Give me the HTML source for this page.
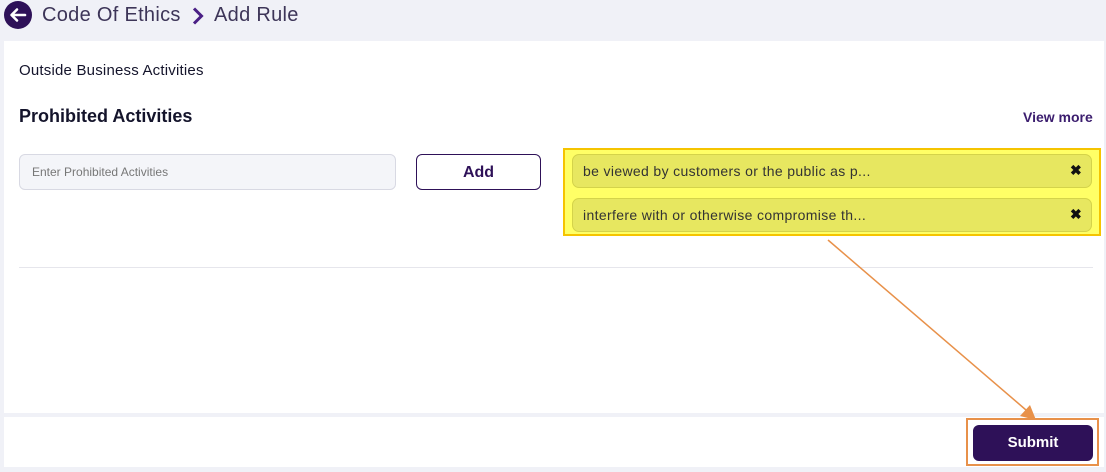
<!DOCTYPE html>
<html><head><style>
body{margin:0;width:1106px;height:472px;background:#f0f1f7;font-family:"Liberation Sans",sans-serif;position:relative;overflow:hidden}
.a{position:absolute}
</style></head><body>
<div class="a" style="left:4px;top:1px;width:28px;height:28px;border-radius:50%;background:#2e1158"></div>
<svg class="a" style="left:4px;top:1px" width="28" height="28"><path d="M21 14H8M13 8.5L7.5 14 13 19.5" stroke="#fff" stroke-width="2.6" fill="none" stroke-linecap="round" stroke-linejoin="round"/></svg>
<div class="a" style="left:42px;top:4px;font-size:20px;color:#3d3558;letter-spacing:0.3px">Code Of Ethics</div>
<svg class="a" style="left:191px;top:6px" width="14" height="20"><path d="M3 2.5l7.5 7.5-7.5 7.5" stroke="#4a1f85" stroke-width="3" fill="none"/></svg>
<div class="a" style="left:214px;top:4px;font-size:20px;color:#3d3558;letter-spacing:0.3px">Add Rule</div>
<div class="a" style="left:4px;top:41px;width:1100px;height:372px;background:#fff"></div>
<div class="a" style="left:4px;top:417px;width:1100px;height:50px;background:#fff"></div>
<div class="a" style="left:19px;top:62px;font-size:15px;color:#14142b;letter-spacing:0.2px">Outside Business Activities</div>
<div class="a" style="left:19px;top:106px;font-size:18px;font-weight:bold;color:#14142b">Prohibited Activities</div>
<div class="a" style="left:1023px;top:109px;font-size:14px;font-weight:bold;color:#3b1d6e">View more</div>
<div class="a" style="left:19px;top:154px;width:375px;height:34px;border:1px solid #d8d9e3;border-radius:6px;background:#f4f5f9"></div>
<div class="a" style="left:32px;top:165px;font-size:12px;color:#777">Enter Prohibited Activities</div>
<div class="a" style="left:416px;top:154px;width:123px;height:34px;border:1.5px solid #2e1158;border-radius:6px;text-align:center;line-height:36px;font-size:16px;font-weight:bold;color:#2e1158">Add</div>
<div class="a" style="left:563px;top:148px;width:538px;height:88px;background:#ffff66;border:2px solid #f5c400;box-sizing:border-box"></div>
<div class="a" style="left:572px;top:154px;width:520px;height:34px;background:#e7e760;border:1px solid #d4d34a;border-radius:7px;box-sizing:border-box"></div>
<div class="a" style="left:583px;top:163px;font-size:14px;color:#333;letter-spacing:0.35px">be viewed by customers or the public as p...</div>
<div class="a" style="left:1070px;top:162px;font-size:14px;font-weight:bold;color:#111">✖</div>
<div class="a" style="left:572px;top:198px;width:520px;height:34px;background:#e7e760;border:1px solid #d4d34a;border-radius:7px;box-sizing:border-box"></div>
<div class="a" style="left:583px;top:207px;font-size:14px;color:#333;letter-spacing:0.35px">interfere with or otherwise compromise th...</div>
<div class="a" style="left:1070px;top:206px;font-size:14px;font-weight:bold;color:#111">✖</div>
<div class="a" style="left:19px;top:267px;width:1074px;height:1px;background:#e6e6ec"></div>
<svg class="a" style="left:0;top:0" width="1106" height="472"><line x1="828" y1="240" x2="1026" y2="410" stroke="#e8914a" stroke-width="1.5"/><path d="M1036 420L1020 416 1030 405Z" fill="#e8914a"/></svg>
<div class="a" style="left:966px;top:418px;width:133px;height:48px;border:2px solid #e8914a;box-sizing:border-box"></div>
<div class="a" style="left:973px;top:425px;width:120px;height:36px;background:#2e1158;border-radius:6px;color:#fff;font-weight:bold;font-size:15px;text-align:center;line-height:36px">Submit</div>
</body></html>
